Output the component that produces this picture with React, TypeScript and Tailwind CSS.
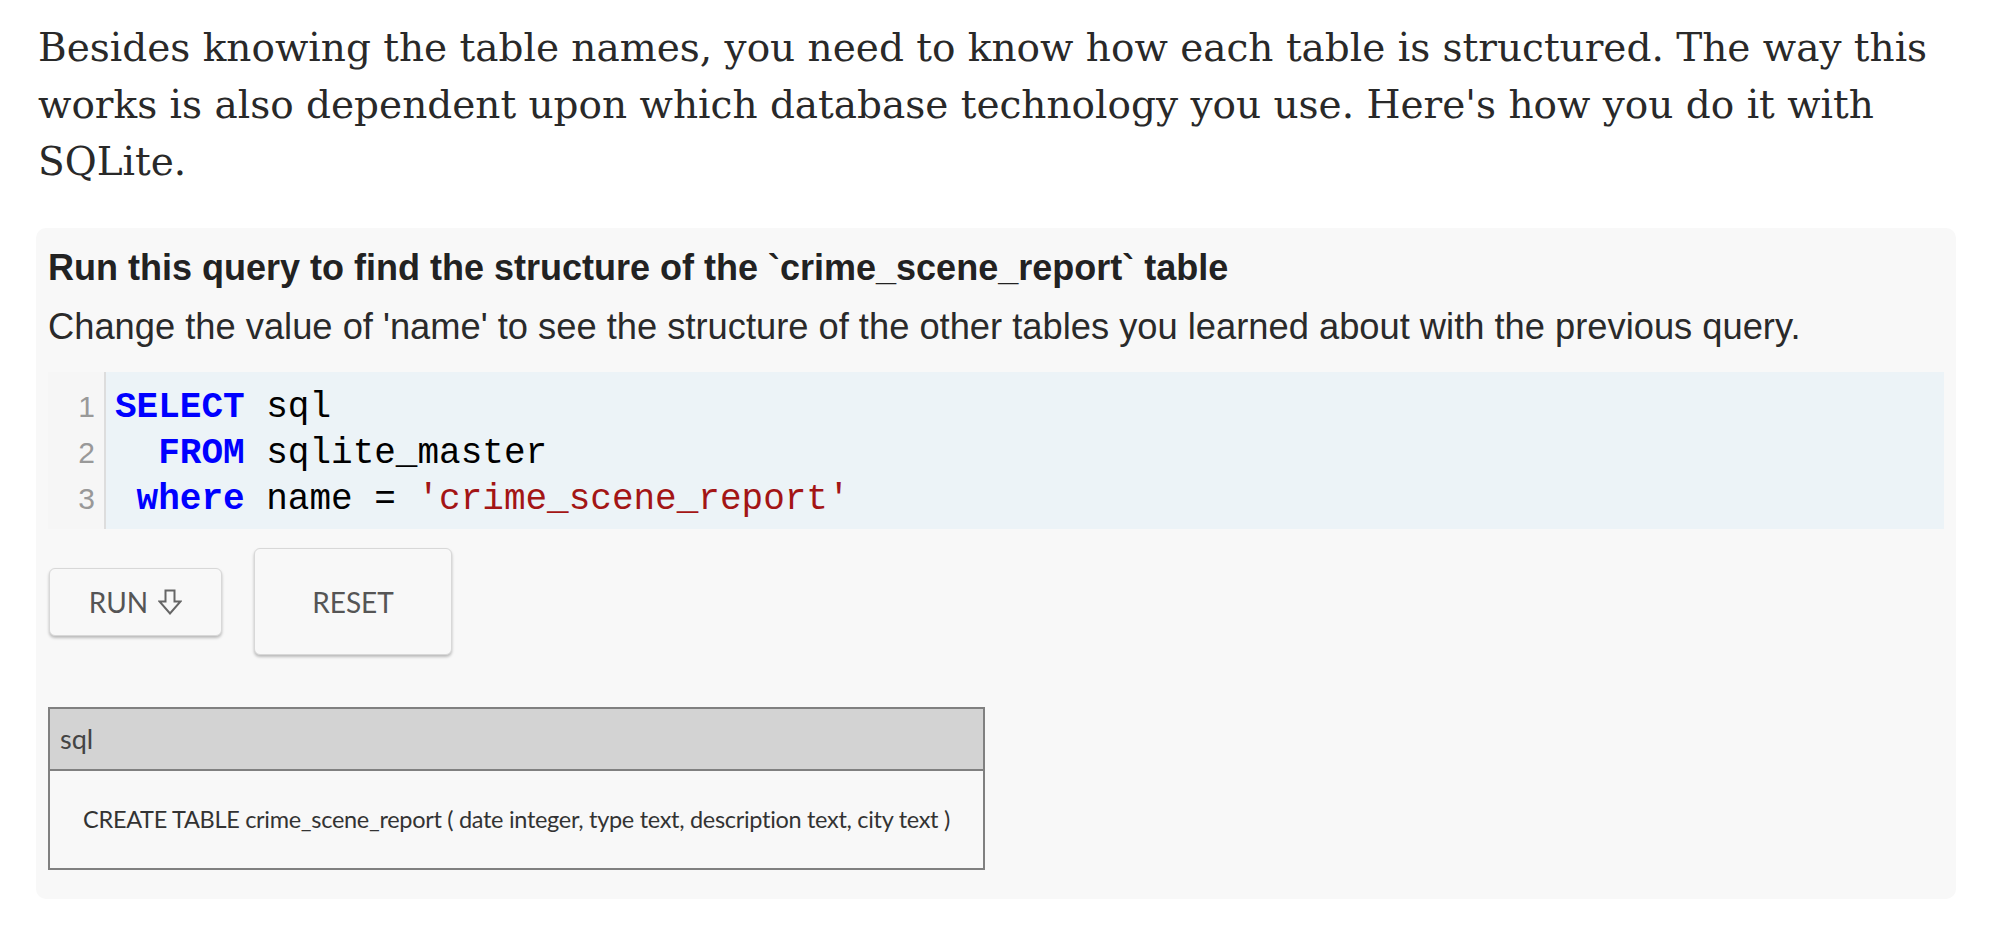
import React from "react";

const serif = { fontFamily: '"DejaVu Serif", "Liberation Serif", serif' };
const sans = { fontFamily: '"Liberation Sans", Arial, sans-serif' };
const mono = { fontFamily: '"Liberation Mono", "Courier New", monospace' };
const lato = { fontFamily: 'Lato, "Open Sans", sans-serif' };

function ArrowDown() {
  return (
    <svg width="24" height="26" viewBox="0 0 24 26" className="inline-block">
      <polygon
        points="7.5,1.5 16.5,1.5 16.5,12.5 22.5,12.5 12,24.5 1.5,12.5 7.5,12.5"
        fill="none"
        stroke="#666"
        strokeWidth="2"
        strokeLinejoin="miter"
      />
    </svg>
  );
}

export default function App() {
  return (
    <div className="min-h-[926px] w-full bg-white pl-[36px] pr-[36px]">
      <p
        className="ml-[2px] pt-[19px] text-[39px] leading-[57px] text-[#292929]"
        style={serif}
      >
        Besides knowing the table names, you need to know how each table is structured. The way this works is also dependent upon which database technology you use. Here's how you do it with SQLite.
      </p>

      <div className="mt-[38px] rounded-[10px] bg-[#f8f8f8] pl-[12px] pr-[12px] pt-[20px] pb-[29px]">
        <h3 className="text-[36px] font-bold leading-[40px] text-[#222]" style={sans}>
          Run this query to find the structure of the `crime_scene_report` table
        </h3>
        <p className="mt-[17px] text-[36.3px] leading-[44px] text-[#2a2a2a]" style={sans}>
          Change the value of 'name' to see the structure of the other tables you learned about with the previous query.
        </p>

        <div className="mt-[23px] flex">
          <div
            className="w-[58px] shrink-0 border-r-2 border-[#dddddd] bg-[#f6f6f6] pr-[9px] pt-[12px] pb-[7px] text-right text-[30px] leading-[46px] text-[#999]"
            style={sans}
          >
            <div>1</div>
            <div>2</div>
            <div>3</div>
          </div>
          <div
            className="flex-1 whitespace-pre bg-[#ecf3f7] pl-[9px] pt-[13px] pb-[6px] text-[36px] leading-[46px] text-black"
            style={mono}
          >
            <div>
              <span className="font-bold text-[#0000ff]">SELECT</span> sql
            </div>
            <div>
              {"  "}
              <span className="font-bold text-[#0000ff]">FROM</span> sqlite_master
            </div>
            <div>
              {" "}
              <span className="font-bold text-[#0000ff]">where</span> name ={" "}
              <span className="text-[#a31515]">'crime_scene_report'</span>
            </div>
          </div>
        </div>

        <div className="mt-[19px] flex items-center gap-[32px] pl-[1px]" style={lato}>
          <button className="flex h-[68px] w-[173px] items-center justify-center gap-[10px] rounded-[6px] border border-[#d8d8d8] bg-[#f8f8f8] text-[28px] text-[#555] shadow-[0_2px_3px_rgba(0,0,0,0.25)]">
            <span>RUN</span>
            <ArrowDown />
          </button>
          <button className="flex h-[107px] w-[198px] items-center justify-center rounded-[6px] border border-[#d8d8d8] bg-[#f8f8f8] text-[28px] text-[#555] shadow-[0_2px_3px_rgba(0,0,0,0.25)]">
            RESET
          </button>
        </div>

        <table className="mt-[52px] w-[937px] border-collapse" style={lato}>
          <thead>
            <tr>
              <th className="h-[62px] border-2 border-[#808080] bg-[#d3d3d3] pl-[10px] text-left text-[27px] font-normal text-[#444]">
                sql
              </th>
            </tr>
          </thead>
          <tbody>
            <tr>
              <td className="h-[99px] border-2 border-[#808080] bg-[#f8f8f8] text-center text-[23.5px] tracking-[-0.3px] text-[#333]">
                CREATE TABLE crime_scene_report ( date integer, type text, description text, city text )
              </td>
            </tr>
          </tbody>
        </table>
      </div>
    </div>
  );
}
